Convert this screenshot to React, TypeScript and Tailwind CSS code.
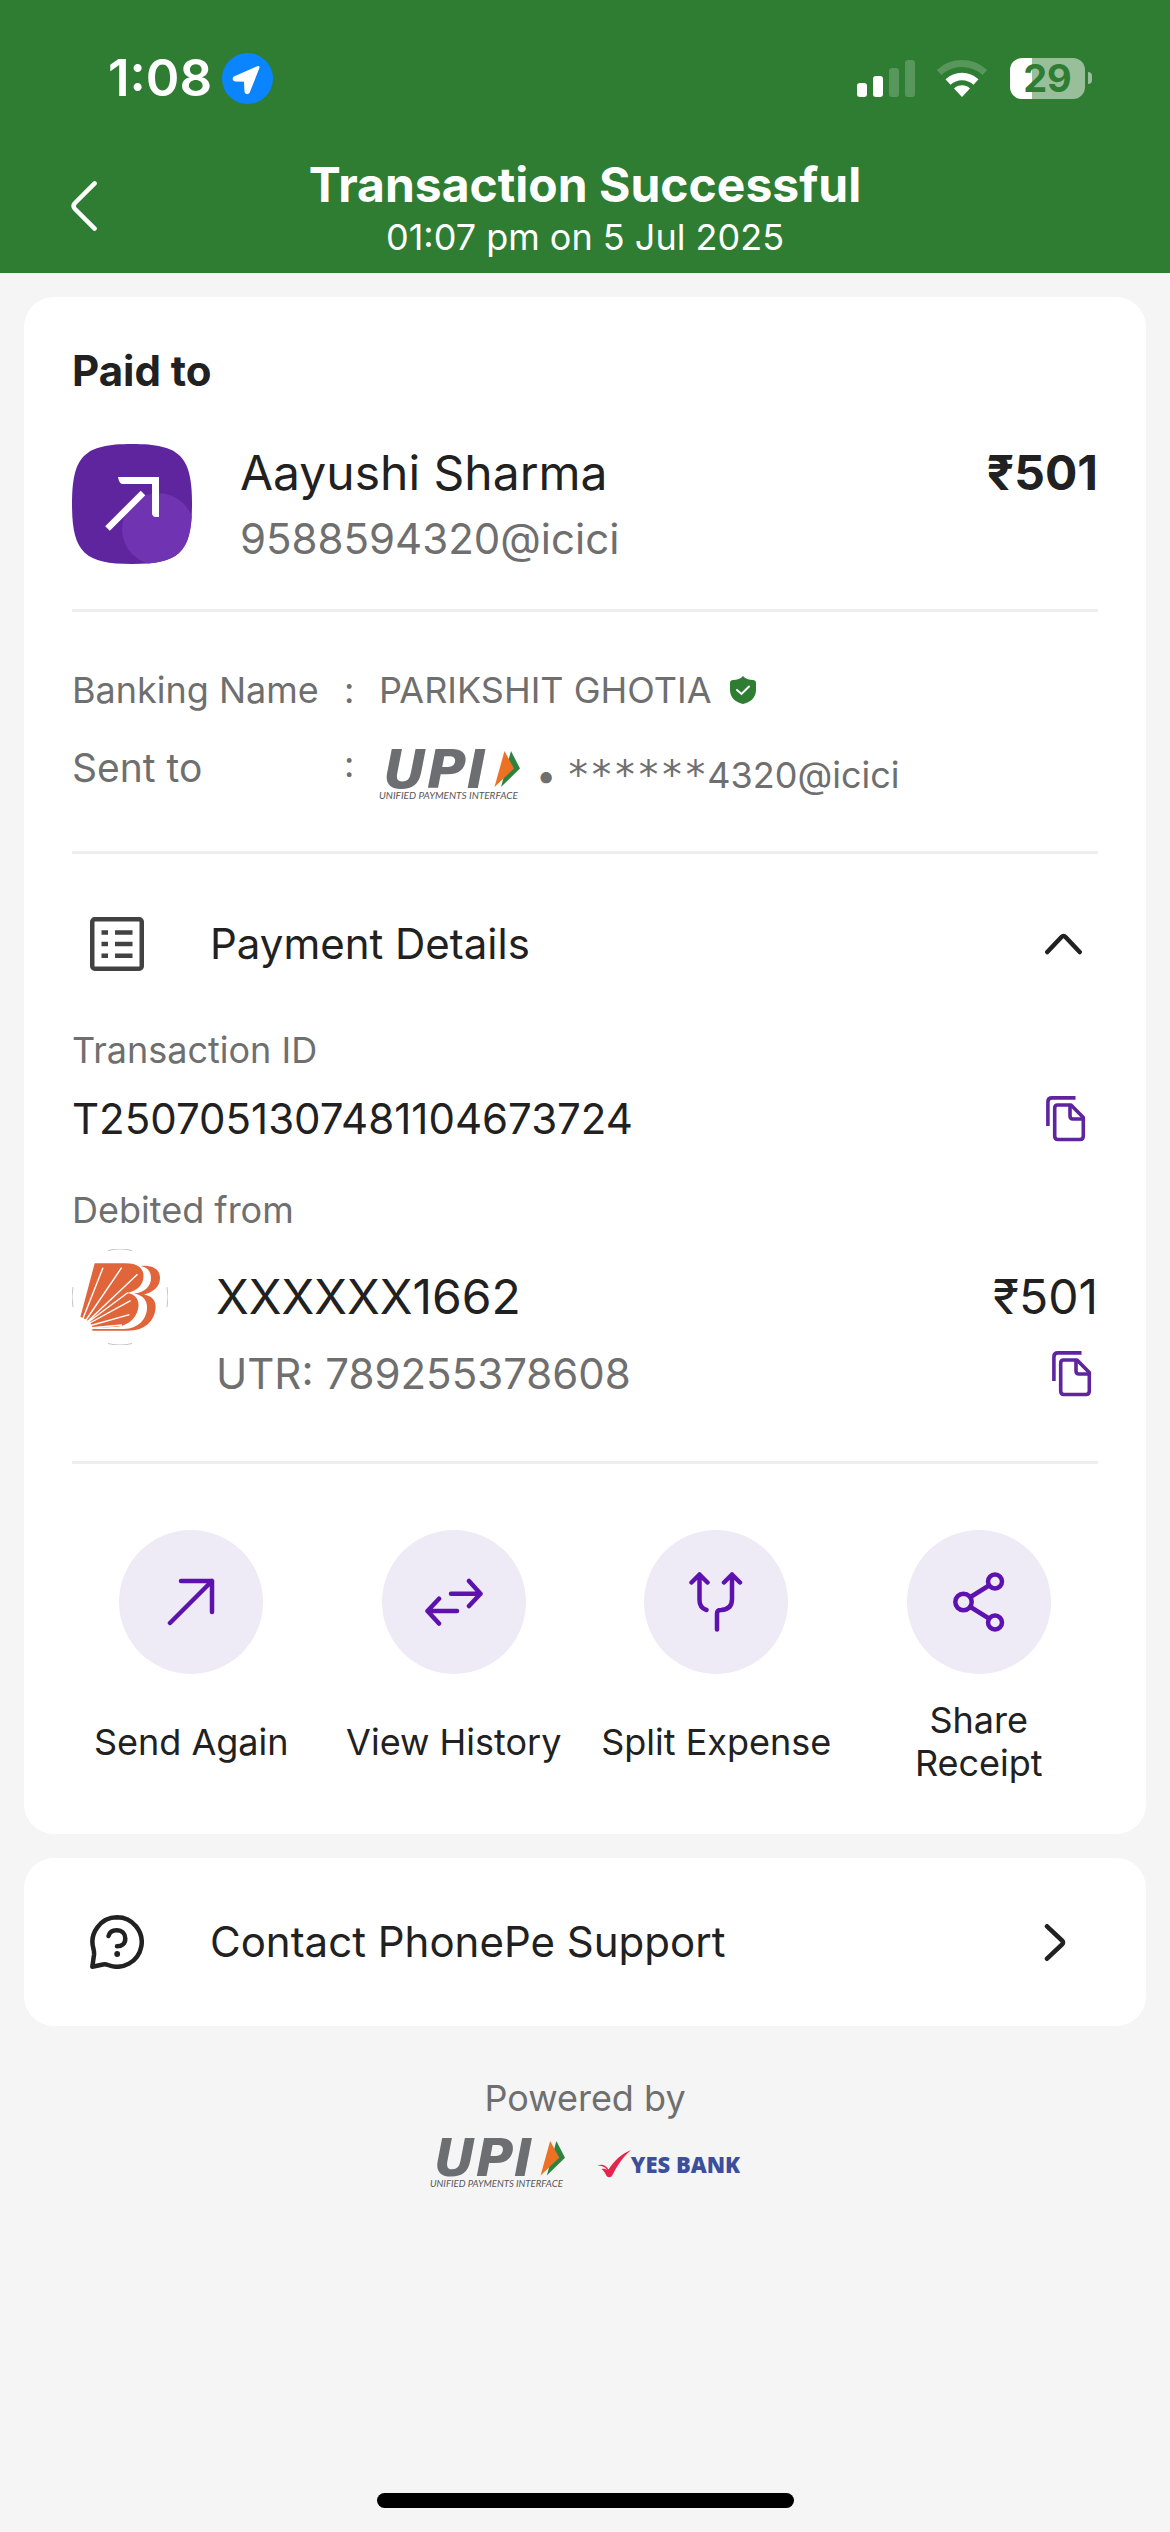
import { useState } from 'react'
import type { ReactNode } from 'react'

const StatusBar = () => {
  return (
    <div className="flex justify-between items-center pl-[108px] pr-[78px] h-[52px]">
      <div className="flex items-center gap-2.5">
        <span className="text-[51px] leading-[52px] font-semibold">1:08</span>
        <svg className="w-[51px] h-[51px]" viewBox="0 0 51 51" aria-hidden="true">
          <circle cx="25.5" cy="25.5" r="25.5" fill="#0b84ff" />
          <path d="M36 14.5 L12.5 24.8 Q11.6 26.8 13.5 27 L23.4 27.3 L24 38.5 Q25 40.6 26.4 38.8 Z" fill="#fff" stroke="#fff" strokeWidth="3" strokeLinejoin="round" />
        </svg>
      </div>
      <div className="flex items-center">
        <svg className="w-[58px] h-[37px]" viewBox="0 0 58 37" fill="#fff" aria-hidden="true">
          <rect x="0" y="23" width="10" height="14" rx="3" />
          <rect x="16" y="16" width="10" height="21" rx="3" />
          <rect x="32" y="8" width="10" height="29" rx="3" opacity="0.2" />
          <rect x="48" y="0" width="10" height="37" rx="3" opacity="0.2" />
        </svg>
        <svg className="w-[50px] h-[37px] ml-[22px]" viewBox="0 0 50 37" fill="none" aria-hidden="true">
          <path d="M2.2 12.5 A33.5 33.5 0 0 1 47.8 12.5" stroke="#fff" strokeWidth="7" opacity="0.2" />
          <path d="M11 22 A20.5 20.5 0 0 1 39 22" stroke="#fff" strokeWidth="7.5" />
          <path d="M17 28.4 A11.7 11.7 0 0 1 33 28.4 L25 37 Z" fill="#fff" />
        </svg>
        <div className="flex items-center gap-[3px] ml-[23px]">
          <div className="w-[75px] h-[41px] rounded-[12px] bg-linear-to-r from-white from-30% to-[#98bf99] to-30% flex items-center justify-center">
            <span className="text-[38px] leading-[41px] font-bold text-[#2f7d32]">29</span>
          </div>
          <div className="w-1 h-3 rounded-r-full bg-[#98bf99]"></div>
        </div>
      </div>
    </div>
  )
}

const Header = () => {
  return (
    <header className="bg-[#2f7d32] text-white pt-[52px] pb-[13px]">
      <StatusBar />
      <div className="grid grid-cols-[120px_1fr_120px] items-center mt-[52px]">
        <button type="button" aria-label="Back" className="justify-self-end mr-[23px] pb-1">
          <svg className="w-[26px] h-[50px]" viewBox="0 0 26 50" fill="none" stroke="#fff" strokeWidth="4.5" strokeLinecap="round">
            <path d="M23.6 2.4 L4 22 Q1.2 25 4 28 L23.6 47.6" />
          </svg>
        </button>
        <div className="text-center">
          <h1 className="text-[48px] leading-[58px] font-bold">Transaction Successful</h1>
          <p className="text-[36px] leading-[46px]">01:07 pm on 5 Jul 2025</p>
        </div>
      </div>
    </header>
  )
}

const UpiLogo = ({ className }: { className: string }) => {
  return (
    <svg className={className} viewBox="0 0 141 50" overflow="visible" role="img" aria-label="UPI Unified Payments Interface">
      <text x="4" y="38" fontSize="54" fontWeight="700" fontStyle="italic" fontFamily="'DejaVu Sans', sans-serif" fill="#6d6e71">UPI</text>
      <text x="0" y="49" fontSize="10" fontStyle="italic" fontFamily="Lato, sans-serif" fill="#55565a">UNIFIED PAYMENTS INTERFACE</text>
      <path d="M132 1 L141 18.5 L122 37 Z" fill="#2a8440" />
      <path d="M125.5 1 L135 18.5 L115.5 37 Z" fill="#ee7023" />
    </svg>
  )
}

const YesBankLogo = () => {
  return (
    <div className="flex items-center">
      <svg className="w-[34px] h-[28px]" viewBox="0 0 34 28" aria-hidden="true">
        <path d="M0 15.5 C5 13.5 9 15 11.5 19.5 C17 11 24 4 34 0 C26 7 20 16 15.5 25 C14 28 10.5 28 9 25 C8 22.5 6.5 20.5 4.5 19 C7 18.5 8.5 19 10 20 C8 16.5 4 15.5 0 15.5 Z" fill="#e4264f" />
      </svg>
      <span className="text-[22px] leading-[28px] font-extrabold font-['Open_Sans',sans-serif] text-[#3b4f9b]">YES BANK</span>
    </div>
  )
}

const PayeeIcon = () => {
  return (
    <svg className="w-[120px] h-[120px] shrink-0" viewBox="0 0 120 120" fill="none" aria-hidden="true">
      <clipPath id="payee">
        <path d="M0 60 C0 12 12 0 60 0 C108 0 120 12 120 60 C120 108 108 120 60 120 C12 120 0 108 0 60 Z" />
      </clipPath>
      <g clipPath="url(#payee)">
        <rect width="120" height="120" fill="#5f259f" />
        <circle cx="86" cy="85" r="36" fill="#7033b1" />
      </g>
      <path d="M48 33 H87 V73 H83 Q80 72 80 69 V40 H50 Q47 39 46 33 Z" fill="#fff" />
      <path d="M71 49 L35.5 84.5" stroke="#fff" strokeWidth="6.5" />
    </svg>
  )
}

const BankIcon = () => {
  return (
    <svg className="w-[96px] h-[96px] shrink-0" viewBox="0 0 96 96" fill="none" role="img" aria-label="Bank of Baroda">
      <path d="M36 1.5 A48 48 0 0 1 60 1.5 M36 94.5 A48 48 0 0 0 60 94.5 M1 38 A48 48 0 0 0 1 58 M95 38 A48 48 0 0 1 95 58" stroke="#c4c4c4" />
      <path d="M69 17 C80 16 88 20 88 29 C88 38 81 43 72 45.5 C81 47 84.5 53 83.5 60 C82 73 72 81.7 56 81.7 H20 V80 H52 C66 79.5 74 71 75 60 C75.5 52 72 46.5 62 44.5 C72 43.5 79 38 79 29 C79 23 76 18.5 69 17 Z" fill="#e0653a" />
      <path d="M22.7 14.3 H54 C65 14.3 71.5 19 71.5 27 C71.5 36 65 42 55 44 C63 45 67 50 66.5 57 C65.5 69 56 77.5 42 78 L20 79 Q19 72 8.4 67.7 Z" fill="#e0653a" />
      <path d="M10 72 L31 18.7 M12 74 L49.6 18.7 M14 74 L65.5 25.3 M15 74 L56 43.5 M16 75 L58.6 51.7 M17 77 L57.4 65.7 M18 79 L50 76" stroke="#fff" strokeWidth="1.4" />
      <circle cx="11" cy="80" r="9.5" fill="#fff" />
    </svg>
  )
}

const CopyIcon = () => {
  return (
    <svg className="w-[40px] h-[46px]" viewBox="0 0 40 46" fill="none" stroke="#5f259f" strokeWidth="3.6" strokeLinejoin="round" aria-hidden="true">
      <path d="M1.9 30 V6 Q1.9 1.9 6 1.9 H29.5" />
      <path d="M11.5 9 H25 L37.3 21.5 V40 Q37.3 43.5 34 43.5 H12 Q8.7 43.5 8.7 40 V12 Q8.7 9 11.5 9 Z" />
      <path d="M24 9 V20 Q24 23 27 23 H37" />
    </svg>
  )
}

const Action = ({ label, children }: { label: string; children: ReactNode }) => {
  return (
    <button type="button" className="flex flex-col items-center gap-[25px]">
      <span className="w-[144px] h-[144px] rounded-full bg-[#eeeaf6] flex items-center justify-center">{children}</span>
      <span className="h-[86px] px-[15px] flex items-center text-center text-[36px] leading-[43px]">{label}</span>
    </button>
  )
}

const Divider = () => <hr className="border-0 h-[3px] bg-[#eeeeee]" />

const PaymentDetails = () => {
  const [open, setOpen] = useState(true)

  return (
    <section className="pt-[63px] pb-16">
      <button type="button" aria-expanded={open} onClick={() => setOpen(!open)} className="w-full pl-[18px] pr-4 flex items-center text-left">
        <svg className="w-[54px] h-[54px]" viewBox="0 0 54 54" fill="none" stroke="#424242" strokeWidth="4.5" aria-hidden="true">
          <rect x="2.25" y="2.25" width="49.5" height="49.5" rx="2.5" />
          <path d="M11.5 15.5 H18 M25 15.5 H42.5 M11.5 27 H18 M25 27 H42.5 M11.5 38.7 H18 M25 38.7 H42.5" strokeWidth="4.6" />
        </svg>
        <span className="ml-[66px] grow text-[42px] leading-[50px]">Payment Details</span>
        <svg className={open ? 'w-[37px] h-[22px]' : 'w-[37px] h-[22px] rotate-180'} viewBox="0 0 37 22" fill="none" stroke="#212121" strokeWidth="4.5" strokeLinecap="round" aria-hidden="true">
          <path d="M2.3 19 L16.5 4 Q18.5 1.8 20.5 4 L34.7 19" />
        </svg>
      </button>

      {open && (
        <div>
          <p className="mt-[57px] text-[36px] leading-[44px] text-[#6f6f6f]">Transaction ID</p>
          <div className="mt-6 flex justify-between items-center">
            <span className="text-[42px] leading-[46px]">T2507051307481104673724</span>
            <button type="button" aria-label="Copy transaction ID" className="mr-3"><CopyIcon /></button>
          </div>
          <p className="mt-[46px] text-[36px] leading-[44px] text-[#6f6f6f]">Debited from</p>
          <div className="mt-[17px] flex gap-12">
            <BankIcon />
            <div className="grow">
              <div className="h-[96px] flex justify-between items-center text-[48px] leading-[58px]">
                <span>XXXXXX1662</span>
                <span>₹501</span>
              </div>
              <div className="mt-1.5 flex justify-between items-center">
                <span className="text-[42px] leading-[46px] text-[#6f6f6f]">UTR: 789255378608</span>
                <button type="button" aria-label="Copy UTR" className="mr-1.5"><CopyIcon /></button>
              </div>
            </div>
          </div>
        </div>
      )}
    </section>
  )
}

const App = () => {
  return (
    <div className="min-h-screen flex flex-col bg-[#f5f5f5] text-[#212121] font-[Inter,sans-serif]">
      <Header />

      <main className="px-6 pt-6 flex flex-col gap-6">
        <div className="bg-white rounded-[30px] px-12 pt-12 pb-[49px]">
          <h2 className="text-[42px] leading-[52px] font-bold">Paid to</h2>
          <div className="mt-[47px] mb-[45px] flex gap-12">
            <PayeeIcon />
            <div className="grow flex flex-col justify-between">
              <div className="flex justify-between text-[48px] leading-[58px]">
                <span>Aayushi Sharma</span>
                <span className="font-bold">₹501</span>
              </div>
              <span className="text-[42px] leading-[50px] text-[#6f6f6f]">9588594320@icici</span>
            </div>
          </div>
          <Divider />

          <div className="pt-14 pb-[51px] grid grid-cols-[272px_35px_1fr] gap-y-[30px] items-start text-[36px] leading-[44px] text-[#6f6f6f]">
            <span>Banking Name</span>
            <span>:</span>
            <div className="flex items-center gap-[18px]">
              <span>PARIKSHIT GHOTIA</span>
              <svg className="w-[26px] h-[28px]" viewBox="0 0 26 28" aria-hidden="true">
                <path d="M13 0 C15 2.5 19 4 23 4 Q26 4.3 26 7 V14 C26 22 20 26.5 13 28 C6 26.5 0 22 0 14 V7 Q0 4.3 3 4 C7 4 11 2.5 13 0 Z" fill="#2f7d32" />
                <path d="M7 14 L11.5 18 L19 10.5" fill="none" stroke="#fff" strokeWidth="2" strokeLinecap="round" />
              </svg>
            </div>
            <span className="text-[39px] leading-[52px]">Sent to</span>
            <span>:</span>
            <div className="pt-2 flex items-center gap-4">
              <UpiLogo className="w-[141px] h-[50px]" />
              <span>• <span className="text-[39px] leading-[44px] font-['DejaVu_Sans_Mono',monospace]">******</span>4320@icici</span>
            </div>
          </div>
          <Divider />

          <PaymentDetails />
          <Divider />

          <div className="-mx-3 mt-[66px] grid grid-cols-4">
            <Action label="Send Again">
              <svg className="w-[48px] h-[48px]" viewBox="0 0 48 48" fill="none" stroke="#5d12b0" strokeWidth="4.5" strokeLinecap="round" strokeLinejoin="round">
                <path d="M14 3 H45 V34 M45 3 L3 45" />
              </svg>
            </Action>
            <Action label="View History">
              <svg className="w-[58px] h-[48px]" viewBox="0 0 58 48" fill="none" stroke="#5d12b0" strokeWidth="4.5" strokeLinecap="round" strokeLinejoin="round">
                <path d="M26 15.7 H55.5 M44 3 L55.5 15.7 L44 28 M32 33 H2.5 M14 20.7 L2.5 33 L14 45.5" />
              </svg>
            </Action>
            <Action label="Split Expense">
              <svg className="w-[54px] h-[60px]" viewBox="0 0 54 60" fill="none" stroke="#5d12b0" strokeWidth="4.5" strokeLinecap="round" strokeLinejoin="round">
                <path d="M2.5 10.5 L10.5 2.5 L18.5 10.5 M10.5 2.5 V28 Q10.5 36 17.5 38 M35 10.5 L43 2.5 L51 10.5 M43 2.5 V27 Q43 37.5 32 38 Q28 38 28 41.5 V57.5" />
              </svg>
            </Action>
            <Action label="Share Receipt">
              <svg className="w-[52px] h-[60px]" viewBox="0 0 52 60" fill="none" stroke="#5d12b0" strokeWidth="4.5">
                <circle cx="10.5" cy="30" r="8.2" />
                <circle cx="42" cy="9.5" r="7" />
                <circle cx="42" cy="50.5" r="7" />
                <path d="M17.5 25 L36 13.5 M17.5 35 L36 46.5" />
              </svg>
            </Action>
          </div>
        </div>

        <a href="#support" className="bg-white rounded-[30px] h-[168px] pl-[66px] pr-20 flex items-center">
          <svg className="w-[54px] h-[54px]" viewBox="0 0 54 54" fill="none" stroke="#212121" strokeWidth="4.5" strokeLinecap="round" strokeLinejoin="round" aria-hidden="true">
            <path d="M27 2.3 A24.7 24.7 0 1 1 18 50 Q15.5 49 13 49.5 L2.3 51.7 L4 40 Q4.3 37 3.5 34 A24.7 24.7 0 0 1 27 2.3 Z" />
            <path d="M18.5 21 C19.5 17.5 22.5 15.3 26.5 15.3 C32 15.3 35.3 19 35.3 23.5 C35.3 28.5 32 31.3 27 31.3" />
            <circle cx="27.2" cy="39" r="2.9" fill="#212121" stroke="none" />
          </svg>
          <span className="ml-[66px] grow text-[42px] leading-[50px]">Contact PhonePe Support</span>
          <svg className="w-[22px] h-[37px]" viewBox="0 0 22 37" fill="none" stroke="#212121" strokeWidth="4.5" strokeLinecap="round" aria-hidden="true">
            <path d="M3 2.3 L18 16.5 Q20.2 18.5 18 20.5 L3 34.7" />
          </svg>
        </a>
      </main>

      <div className="mt-[50px] flex flex-col items-center gap-5">
        <p className="text-[36px] leading-[44px] text-[#6f6f6f]">Powered by</p>
        <div className="flex items-center gap-8">
          <UpiLogo className="w-[135px] h-[48px]" />
          <YesBankLogo />
        </div>
      </div>

      <div className="mt-auto mb-6 self-center w-[417px] h-[15px] rounded-full bg-black"></div>
    </div>
  )
}

export default App
